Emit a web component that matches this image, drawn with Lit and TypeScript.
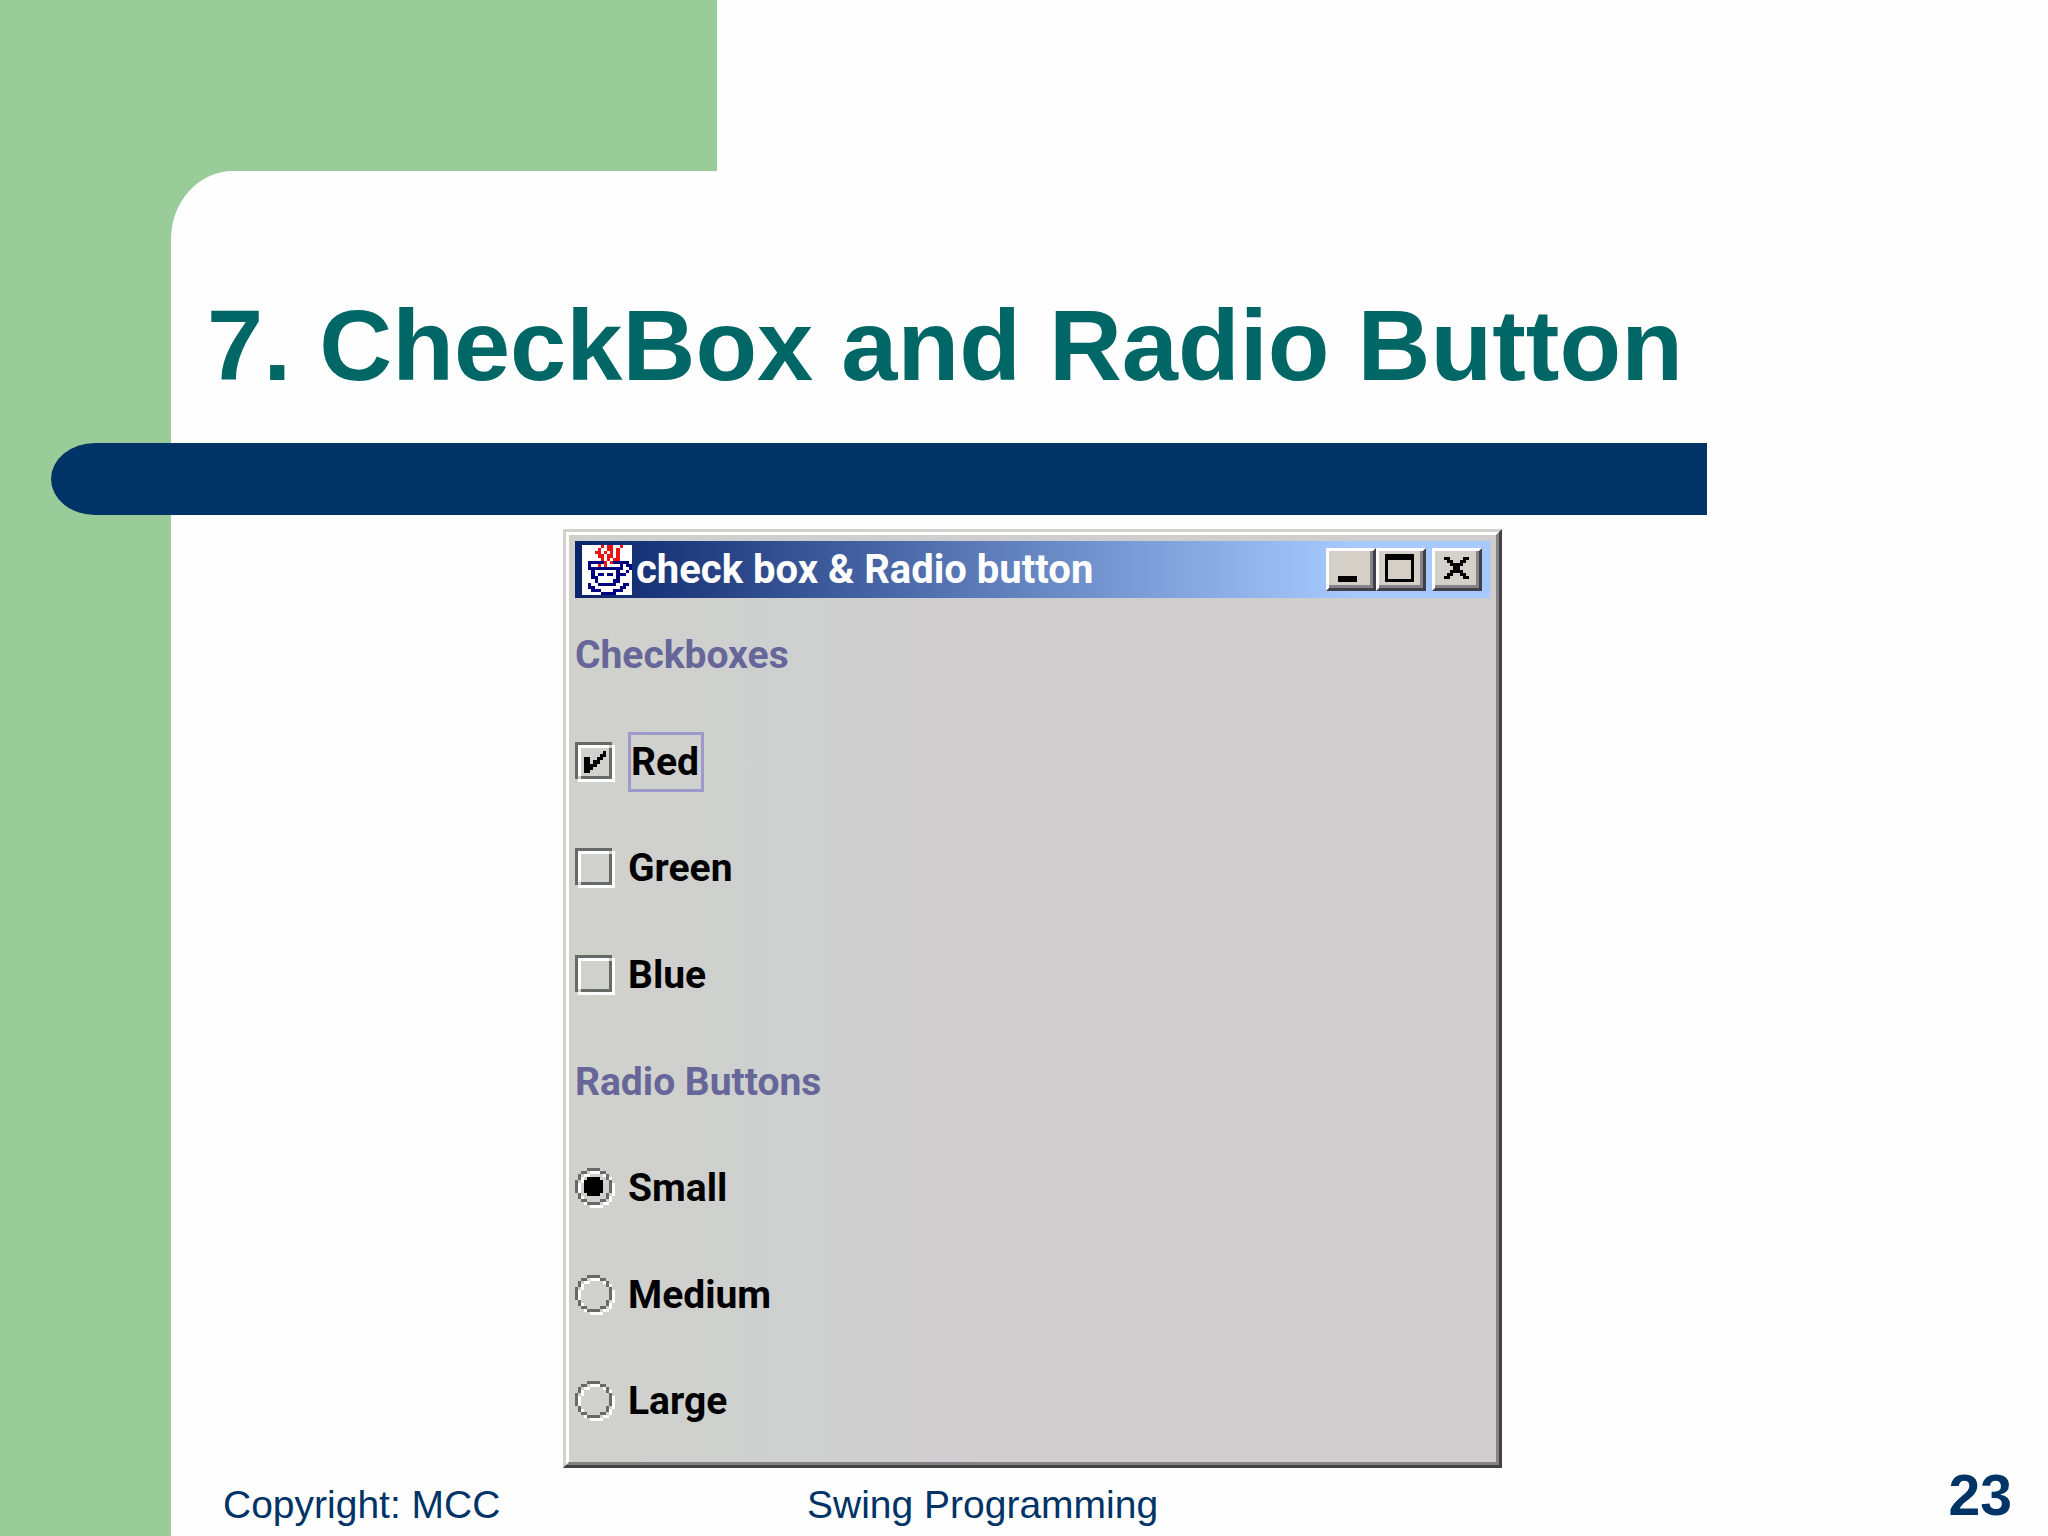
import { LitElement, html, svg, css } from "lit";
import { customElement, property } from "lit/decorators.js";

type Cell = [x: number, y: number, w?: number, h?: number];

const cells = (list: Cell[], fill: string) =>
  list.map(([x, y, w = 1, h = 1]) => svg`<rect x=${x} y=${y} width=${w} height=${h} fill=${fill}></rect>`);

/** Ring of the 13x13 radio icon. */
const RING: Cell[] = [
  [4, 0, 4, 1], [8, 1, 2, 1], [10, 2, 1, 2], [11, 4, 1, 4], [10, 8, 1, 2], [8, 10, 2, 1],
  [4, 11, 4, 1], [2, 10, 2, 1], [1, 8, 1, 2], [0, 4, 1, 4], [1, 2, 1, 2], [2, 1, 2, 1],
];
const DOT: Cell[] = [[4, 3, 4, 6], [3, 4, 6, 4]];
const TICK: Cell[] = [[3, 5, 2, 5], [9, 3], [8, 4, 2, 1], [7, 5, 2, 1], [6, 6, 2, 1], [5, 7, 2, 1], [5, 8]];

/** Diagonals of the 8x7 close glyph. */
const CROSS: Cell[] = [
  [0, 0, 2, 1], [6, 0, 2, 1], [1, 1, 2, 1], [5, 1, 2, 1], [2, 2, 4, 1], [3, 3, 2, 1],
  [2, 4, 4, 1], [1, 5, 2, 1], [5, 5, 2, 1], [0, 6, 2, 1], [6, 6, 2, 1],
];

/** Bitmap of the coffee cup: r = steam, b = cup outline. */
const CUP = [
  "......r.rr..r...",
  ".....r..rr.r....",
  "....rr.r.r.r....",
  ".....rr.rr.r....",
  "......r.r.rr....",
  "..bbbbbr.rbbbbb.",
  "..b..r.r....b.bb",
  "..bbbbbbbbbbb..b",
  "...b.......b..b.",
  "...b.bb.bb.bbb..",
  "...bb......b....",
  "....b.....bb....",
  "..b..bbbbbb..bb.",
  "..bb........bb..",
  "...bbb....bbb...",
  "......bbbbb.....",
];

@customElement("choice-row")
export class ChoiceRow extends LitElement {
  @property() kind: "checkbox" | "radio" = "checkbox";
  @property() text = "";
  @property() group = "";
  @property({ type: Boolean }) checked = false;
  @property({ type: Boolean }) marked = false;

  static styles = css`
    :host { display: flex; align-items: center; }
    .choice { display: flex; align-items: center; gap: 13px; }
    .box { display: grid; width: 40px; height: 40px; }
    .box > * { grid-area: 1 / 1; width: 40px; height: 40px; margin: 0; }
    .native { appearance: none; outline: none; background: none; }
    .icon { display: block; pointer-events: none; }
    .text { display: flex; align-items: center; height: 60px; box-sizing: border-box; }
    .marked { border: 3px solid #9f98cb; padding-right: 2px; }
  `;

  private toggle(e: Event) {
    this.checked = (e.target as HTMLInputElement).checked;
    if (this.kind === "radio" && this.checked) {
      this.dispatchEvent(new CustomEvent("pick", { detail: this.text, bubbles: true, composed: true }));
    }
  }

  private get art() {
    if (this.kind === "radio") {
      return svg`
        <g transform="translate(1 1)">${cells(RING, "#ffffff")}</g>
        ${cells(RING, "#686a68")}
        ${this.checked ? cells(DOT, "#000000") : null}`;
    }
    return svg`
      <path d="M1 1H13V13H1ZM2 2V12H12V2Z" fill="#ffffff" fill-rule="evenodd"></path>
      <path d="M0 0H12V1H1V12H0ZM11 1H12V12H1V11H11Z" fill="#686a68"></path>
      <path d="M11 1H12V2H11ZM1 11H2V12H1Z" fill="#d0d1d0"></path>
      ${this.checked ? cells(TICK, "#000000") : null}`;
  }

  render() {
    return html`
      <label class="choice">
        <span class="box">
          <input class="native" type=${this.kind} name=${this.group} .checked=${this.checked} @change=${this.toggle} />
          <svg class="icon" viewBox="0 0 13 13" shape-rendering="crispEdges" aria-hidden="true">${this.art}</svg>
        </span>
        <span class="text ${this.marked ? "marked" : ""}">${this.text}</span>
      </label>`;
  }
}

@customElement("app-root")
export class AppRoot extends LitElement {
  @property() size = "Small";

  static styles = css`
    :host { display: block; font-family: "Liberation Sans", Arial, sans-serif; color: #003366; }
    .slide { min-height: 100vh; display: flex; flex-direction: column; background: #99cc99; }
    .top { display: flex; justify-content: flex-end; height: 171px; }
    .corner { width: 65%; background: #fefefe; }
    .panel {
      flex: 1; display: flex; flex-direction: column; margin-left: 171px;
      background: #fefefe; border-top-left-radius: 62px 68px;
    }
    .title {
      margin: 0; height: 272px; box-sizing: border-box; padding: 116px 0 0 36px;
      font-size: 101px; line-height: 116px; font-weight: 700; color: #006666; white-space: nowrap;
    }
    .rule { height: 72px; margin: 0 341px 0 -120px; background: #003366; border-radius: 44px 0 0 44px / 36px 0 0 36px; }
    .window {
      width: 50%; aspect-ratio: 1; margin: 14px 0 0 392px; box-sizing: border-box;
      display: flex; flex-direction: column;
      font-family: Roboto, sans-serif; font-weight: 700; font-size: 39px; line-height: 46px; color: #000;
      border: 3px solid; border-color: #d4d0d0 #444244 #444244 #d4d0d0;
    }
    .frame {
      flex: 1; display: flex; flex-direction: column; padding: 6px;
      border: 3px solid; border-color: #fff #848284 #848284 #fff;
      background: linear-gradient(90deg, #d1d1cc 0, #ced0cf 20%, #d0cdcf 45%, #d0cdcf 100%);
    }
    .bar {
      display: flex; align-items: center; height: 57px; padding: 0 8px 0 7px;
      background: linear-gradient(90deg, #0a246a, #a6caff 85%); color: #fff;
    }
    .cup { width: 50px; height: 50px; background: #fff; }
    .caption { flex: 1; margin-left: 4px; font-size: 40px; }
    .controls { display: flex; }
    .control {
      display: grid; place-items: center; width: 50px; height: 43px; padding: 0; box-sizing: border-box;
      background: #d4d0c8; border: 3px solid; border-color: #fff #404048 #404048 #fff;
      box-shadow: inset -3px -3px #848284;
    }
    .close { margin-left: 6px; }
    .glyph { display: block; width: 44px; height: 37px; }
    .client { flex: 1; display: grid; grid-template-rows: repeat(8, 1fr); padding: 4px 0 1px; }
    .heading { display: flex; align-items: center; margin: 0; font-size: 39px; color: #666699; }
    .footer {
      flex: 1; display: grid; grid-template-columns: 392px 840px 1fr; align-items: center;
      padding: 4px 36px 0 52px; font-size: 39px; line-height: 46px;
    }
    .footer span { white-space: nowrap; }
    .unit { padding-left: 192px; }
    .number { text-align: right; font-size: 57px; font-weight: 700; padding-bottom: 20px; }
  `;

  private get cup() {
    return CUP.flatMap((row, y) =>
      [...row].map((c, x) =>
        c === "." ? null : svg`<rect x=${x} y=${y} width="1" height="1" fill=${c === "r" ? "#ee1111" : "#000080"}></rect>`));
  }

  render() {
    return html`
      <main class="slide">
        <div class="top"><div class="corner"></div></div>
        <div class="panel">
          <h1 class="title">7. CheckBox and Radio Button</h1>
          <div class="rule"></div>
          <section class="window">
            <div class="frame">
              <header class="bar">
                <svg class="cup" viewBox="0 0 16 16" shape-rendering="crispEdges" aria-hidden="true">${this.cup}</svg>
                <span class="caption">check box &amp; Radio button</span>
                <div class="controls">
                  <button class="control" aria-label="Minimize">
                    <svg class="glyph" viewBox="3 3 44 37"><rect x="12" y="28" width="19" height="6"></rect></svg>
                  </button>
                  <button class="control" aria-label="Maximize">
                    <svg class="glyph" viewBox="3 3 44 37"><path fill-rule="evenodd" d="M9 6H38V34H9ZM12 12V31H35V12Z"></path></svg>
                  </button>
                  <button class="control close" aria-label="Close">
                    <svg class="glyph" viewBox="3 3 44 37" shape-rendering="crispEdges">
                      <g transform="translate(12 9) scale(3.125)">${cells(CROSS, "#000000")}</g>
                    </svg>
                  </button>
                </div>
              </header>
              <div class="client">
                <h2 class="heading">Checkboxes</h2>
                <choice-row text="Red" checked marked></choice-row>
                <choice-row text="Green"></choice-row>
                <choice-row text="Blue"></choice-row>
                <h2 class="heading">Radio Buttons</h2>
                ${["Small", "Medium", "Large"].map((s) => html`
                  <choice-row kind="radio" group="size" text=${s} .checked=${this.size === s}
                    @pick=${() => (this.size = s)}></choice-row>`)}
              </div>
            </div>
          </section>
          <footer class="footer">
            <span>Copyright: MCC</span>
            <span class="unit">Swing Programming</span>
            <span class="number">23</span>
          </footer>
        </div>
      </main>`;
  }
}
